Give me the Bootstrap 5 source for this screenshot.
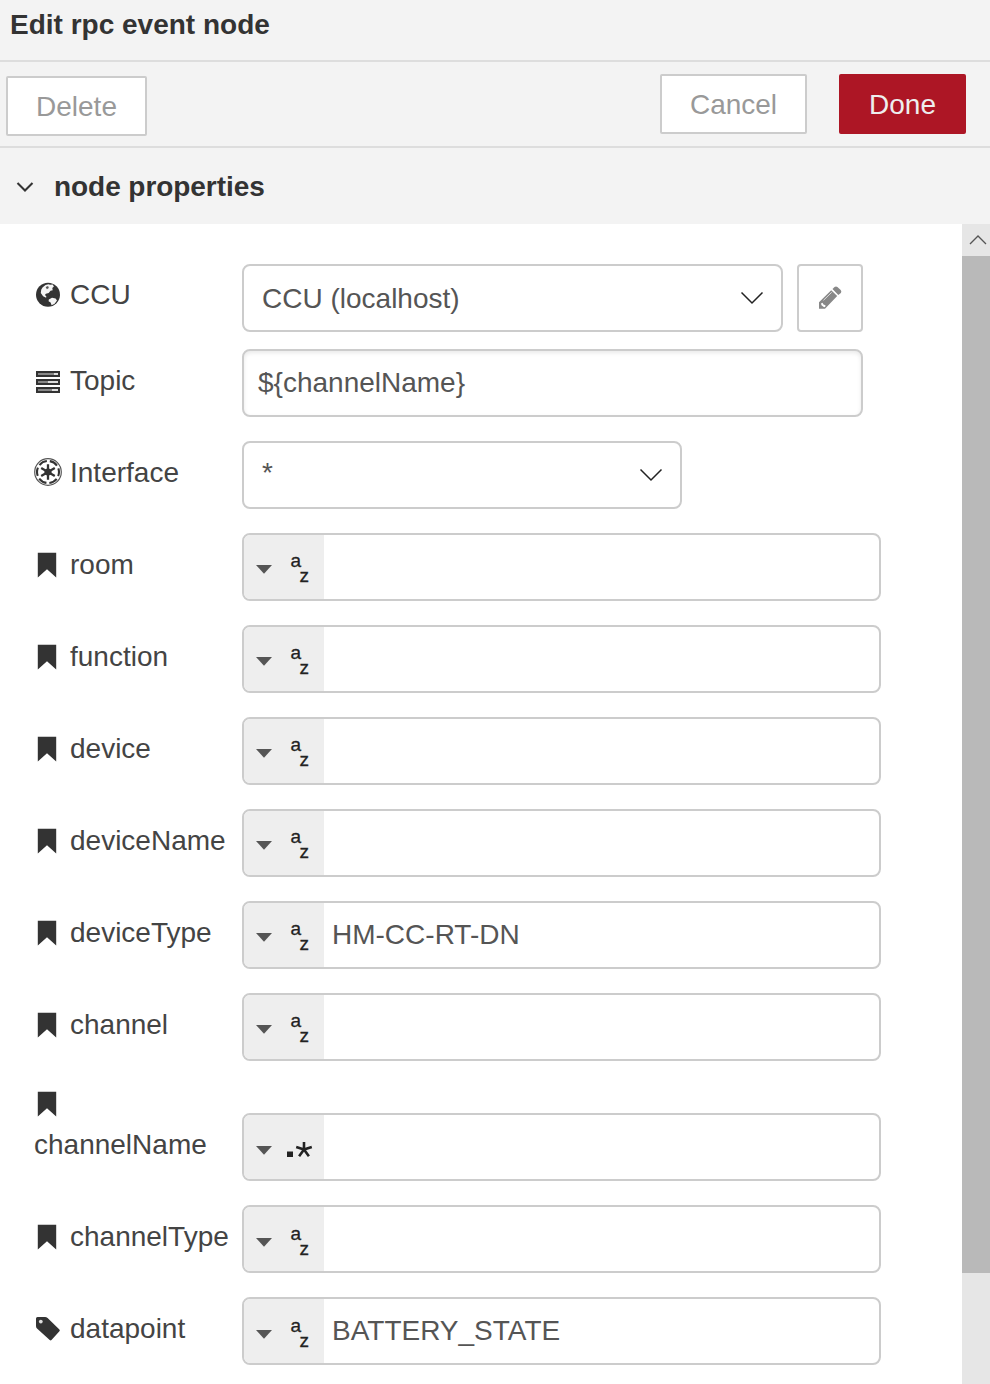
<!DOCTYPE html>
<html lang="en">
<head>
<meta charset="utf-8">
<meta name="viewport" content="width=device-width, initial-scale=1">
<title>Edit rpc event node</title>
<link href="https://cdn.jsdelivr.net/npm/bootstrap@5.3.0/dist/css/bootstrap.min.css" rel="stylesheet">
<style>
  body { font: 28px/40px "Liberation Sans", Arial, sans-serif; color: #444; background: #fff; height: 1384px; overflow: hidden; }
  svg { display: block; flex: none; }
  .tray-title { height: 62px; padding: 5px 10px 0; background: #f3f3f3; border-bottom: 2px solid #ddd; font-weight: 700; color: #333; }
  .tray-bar { height: 86px; padding: 12px 24px 0 6px; background: #f3f3f3; border-bottom: 2px solid #ddd; }
  .tray-btn { --bs-btn-font-size: 28px; --bs-btn-line-height: 40px; --bs-btn-color: #999; --bs-btn-bg: #fff; --bs-btn-border-color: #ccc; --bs-btn-border-width: 2px; --bs-btn-border-radius: 2px; height: 60px; padding: 9px 0 7px; }
  .tray-done { --bs-btn-color: #eee; --bs-btn-bg: #ad1625; --bs-btn-border-color: #ad1625; width: 127px; }
  .section-head { height: 76px; padding: 2px 16px 0; background: #f3f3f3; font-weight: 700; color: #333; letter-spacing: -.06px; }
  .form-pane { height: 1160px; padding: 40px 0 0 34px; overflow: hidden; }
  .prop-row { margin-bottom: 24px; }
  .prop-label { width: 208px; padding-top: 12px; white-space: nowrap; }
  .prop-label svg { width: 36px; height: 28px; margin-top: 6px; }
  .two-line { height: 96px; margin-top: 30px; padding-top: 0; }
  .two-line svg { margin: 5px 0 7px; }
  .field { height: 68px; border: 2px solid #ccc; border-radius: 8px; color: #555; background: #fff; overflow: hidden; }
  .ccu { width: 541px; padding: 0 17px 0 18px; }
  .topic { width: 621px; padding: 0 14px; box-shadow: inset 0 2px 4px rgba(0,0,0,.09); }
  .iface { width: 440px; padding: 0 17px 0 18px; }
  .typed { width: 639px; }
  .kind { width: 80px; height: 64px; padding: 30px 0 0 12px; background: #eee; }
  .kind-az { margin: -14px 0 0 18.500px; font-size: 19px; line-height: 20px; color: #222; -webkit-text-stroke: .3px #222; }
  .kind-az span + span { margin: 15px 0 0 -1.500px; }
  .edit-btn { width: 66px; height: 68px; margin-left: 14px; border: 2px solid #ccc; border-radius: 4px; }
  .scroll-rail { width: 28px; height: 1160px; background: #e6e6e6; }
  .scroll-thumb { height: 1017px; background: #b9b9b9; }
</style>
<script src="https://cdn.jsdelivr.net/npm/bootstrap@5.3.0/dist/js/bootstrap.bundle.min.js"></script>
</head>
<body>
<svg width="0" height="0" class="position-absolute" aria-hidden="true">
  <symbol id="mark-icon" viewBox="0 0 36 28"><path fill="#333" d="M3.800 1.800h18.400v24.600L13 18.300l-9.200 8.100z"/></symbol>
  <symbol id="caret" viewBox="0 0 16 9"><path fill="#555" d="M0 0h16L8 8.800z"/></symbol>
  <symbol id="chevron" viewBox="0 0 24 14"><path fill="none" stroke="#222" stroke-width="1.500" d="M1.500 1.500 12 12 22.500 1.500"/></symbol>
</svg>

<header class="tray-title">Edit rpc event node</header>
<div class="tray-bar d-flex">
  <button class="btn tray-btn" style="width:141px;margin-top:2px">Delete</button>
  <button class="btn tray-btn ms-auto" style="width:147px;margin-right:32px">Cancel</button>
  <button class="btn tray-btn tray-done">Done</button>
</div>
<div class="section-head d-flex align-items-center">
  <svg width="18" height="12" viewBox="0 0 18 12" style="margin-right:20px"><path fill="none" stroke="#333" stroke-width="2.100" d="M1.500 2 9 9.400 16.500 2"/></svg>node properties
</div>

<div class="d-flex">
  <main class="form-pane flex-grow-1">
    <div class="prop-row d-flex" style="margin-bottom:17px">
      <div class="prop-label d-flex" style="padding-top:11px">
        <svg viewBox="0 0 36 28"><circle cx="14" cy="13.700" r="12" fill="#333"/><path fill="#f4f4f4" d="M8.500 6.500l3-2.500 3-.800 1.500.600 2.700-.300 1.200 2-1.600 1.500.4 2.200-2.200.5-1.800 2.300-2.800.7-1 1.400 1.400 1.200-.2 1.400-3-1.400-2.300-3.300.4-3.200zM14.800 18.600l3.200-1.800 3.600.6 1.400 2-2.400 3.400-3 1.500-1-2.700-2-1.400z"/><path fill="#555" d="M11.600 6l2.500-.9.7 1.800-1.900 1.300z"/></svg>CCU
      </div>
      <div class="field ccu d-flex align-items-center justify-content-between"><span class="pt-1" style="margin-top:-2px">CCU (localhost)</span><svg width="24" height="14"><use href="#chevron"/></svg></div>
      <div class="edit-btn d-flex align-items-center justify-content-center"><svg width="24" height="24" viewBox="0 0 24 24"><path fill="#888" d="M1 16.200 13.200 4.200l6 5.800L7 22.800H1zM14.500 3l2-1.900q1.400-1 2.900-.1L22.700 4q1.200 1.500.2 2.900L20.300 9z"/><path stroke="#ddd" stroke-width="1" d="M5.500 14.300 13.700 6.300"/><path fill="#fff" d="M3 17.500l1.500-.8 1 1.800 2 .8-.2 1.400-1.200.6-2.600-2z"/></svg></div>
    </div>
    <div class="prop-row d-flex">
      <div class="prop-label d-flex">
        <svg viewBox="0 0 36 28" style="margin-top:7px"><g fill="#888" stroke="#333" stroke-width="2"><path d="M3 4h22v4H3zM3 12h22v4H3zM3 20h22v4H3z"/></g><path fill="#ddd" d="M20 5h4v2h-4zM14 13h10v2H14zM18 21h6v2h-6z"/></svg>Topic
      </div>
      <div class="field topic d-flex align-items-center">${channelName}</div>
    </div>
    <div class="prop-row d-flex">
      <div class="prop-label d-flex">
        <svg viewBox="0 0 36 28" style="margin-top:5px"><circle cx="14" cy="14" r="13.300" fill="none" stroke="#555" stroke-width="1.200"/><circle cx="14" cy="14" r="11" fill="none" stroke="#333" stroke-width="2.100" stroke-dasharray="8.500 3.020" stroke-dashoffset="4.250"/><circle cx="14" cy="14" r="3.600" fill="#333"/><path stroke="#333" stroke-width="2.300" d="M14 6.200v15.600M7.200 10.100l13.600 7.800M20.800 10.100 7.200 17.900"/></svg>Interface
      </div>
      <div class="field iface d-flex align-items-center justify-content-between"><span style="padding-bottom:4px">*</span><svg width="24" height="14"><use href="#chevron"/></svg></div>
    </div>
    <div class="prop-row d-flex"><div class="prop-label d-flex"><svg><use href="#mark-icon"/></svg>room</div><div class="field typed d-flex"><div class="kind d-flex"><svg width="16" height="9"><use href="#caret"/></svg><div class="kind-az d-flex"><span>a</span><span>z</span></div></div></div></div>
    <div class="prop-row d-flex"><div class="prop-label d-flex"><svg><use href="#mark-icon"/></svg>function</div><div class="field typed d-flex"><div class="kind d-flex"><svg width="16" height="9"><use href="#caret"/></svg><div class="kind-az d-flex"><span>a</span><span>z</span></div></div></div></div>
    <div class="prop-row d-flex"><div class="prop-label d-flex"><svg><use href="#mark-icon"/></svg>device</div><div class="field typed d-flex"><div class="kind d-flex"><svg width="16" height="9"><use href="#caret"/></svg><div class="kind-az d-flex"><span>a</span><span>z</span></div></div></div></div>
    <div class="prop-row d-flex"><div class="prop-label d-flex"><svg><use href="#mark-icon"/></svg>deviceName</div><div class="field typed d-flex"><div class="kind d-flex"><svg width="16" height="9"><use href="#caret"/></svg><div class="kind-az d-flex"><span>a</span><span>z</span></div></div></div></div>
    <div class="prop-row d-flex"><div class="prop-label d-flex"><svg><use href="#mark-icon"/></svg>deviceType</div><div class="field typed d-flex"><div class="kind d-flex"><svg width="16" height="9"><use href="#caret"/></svg><div class="kind-az d-flex"><span>a</span><span>z</span></div></div><span class="ps-2 pt-2 mt-1">HM-CC-RT-DN</span></div></div>
    <div class="prop-row d-flex" style="margin-bottom:-6px"><div class="prop-label d-flex"><svg><use href="#mark-icon"/></svg>channel</div><div class="field typed d-flex"><div class="kind d-flex"><svg width="16" height="9"><use href="#caret"/></svg><div class="kind-az d-flex"><span>a</span><span>z</span></div></div></div></div>
    <div class="prop-row d-flex align-items-end"><div class="prop-label two-line"><svg><use href="#mark-icon"/></svg>channelName</div><div class="field typed d-flex"><div class="kind d-flex"><svg width="16" height="9" style="margin-top:1px"><use href="#caret"/></svg><svg width="28" height="20" viewBox="0 0 28 20" style="margin:-5px 0 0 14px"><path fill="#222" d="M1 11.500h6V17H1z"/><path stroke="#222" stroke-width="2.600" fill="none" d="M18 9.600V2M18 9.600l-7.800-2.500M18 9.600l7.800-2.500M18 9.600l-4.900 6.600M18 9.600l4.900 6.600"/></svg></div></div></div>
    <div class="prop-row d-flex"><div class="prop-label d-flex"><svg><use href="#mark-icon"/></svg>channelType</div><div class="field typed d-flex"><div class="kind d-flex" style="padding-top:31px"><svg width="16" height="9"><use href="#caret"/></svg><div class="kind-az d-flex"><span>a</span><span>z</span></div></div></div></div>
    <div class="prop-row d-flex">
      <div class="prop-label d-flex"><svg viewBox="0 0 36 28"><path fill="#333" d="M2 3.500Q2 2 3.500 2H11q1.500 0 2.600 1L25.400 14.500q.900.900 0 1.800L17.500 25q-.900.900-1.800 0L3 13.500Q2 12.500 2 11z"/><circle cx="6.800" cy="6.600" r="1.900" fill="#ddd"/></svg>datapoint</div>
      <div class="field typed d-flex"><div class="kind d-flex" style="padding-top:31px"><svg width="16" height="9"><use href="#caret"/></svg><div class="kind-az d-flex"><span>a</span><span>z</span></div></div><span class="ps-2 pt-2 mt-1">BATTERY_STATE</span></div>
    </div>
  </main>
  <div class="scroll-rail">
    <svg width="28" height="32" viewBox="0 0 28 32"><path fill="none" stroke="#555" stroke-width="1.300" d="M8 20l8-8 8 8"/></svg>
    <div class="scroll-thumb"></div>
  </div>
</div>
</body>
</html>
